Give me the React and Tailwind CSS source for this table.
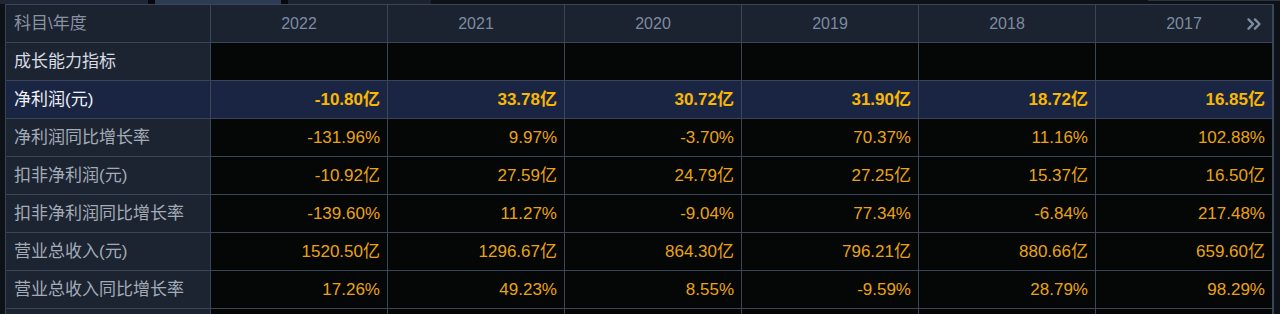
import { ChevronsRight } from 'lucide-react'

const YEARS = ['2022', '2021', '2020', '2019', '2018', '2017']

const ROWS = [
  { label: '净利润(元)', hi: true, values: ['-10.80亿', '33.78亿', '30.72亿', '31.90亿', '18.72亿', '16.85亿'] },
  { label: '净利润同比增长率', values: ['-131.96%', '9.97%', '-3.70%', '70.37%', '11.16%', '102.88%'] },
  { label: '扣非净利润(元)', values: ['-10.92亿', '27.59亿', '24.79亿', '27.25亿', '15.37亿', '16.50亿'] },
  { label: '扣非净利润同比增长率', values: ['-139.60%', '11.27%', '-9.04%', '77.34%', '-6.84%', '217.48%'] },
  { label: '营业总收入(元)', values: ['1520.50亿', '1296.67亿', '864.30亿', '796.21亿', '880.66亿', '659.60亿'] },
  { label: '营业总收入同比增长率', values: ['17.26%', '49.23%', '8.55%', '-9.59%', '28.79%', '98.29%'] },
]

const FONT = { fontFamily: '"Liberation Sans", "Noto Sans CJK SC", sans-serif' }

export default function App() {
  return (
    <div className="w-[1280px] h-[314px] overflow-hidden bg-[#0d1118]" style={FONT}>
      {/* Top tab strip */}
      <div className="flex h-[4px]">
        <div className="w-[148px] bg-[#1f2635]" />
        <div className="w-[7px] bg-[#07090c]" />
        <div className="w-[126px] bg-[#2e3c53]" />
        <div className="w-[7px] bg-[#07090c]" />
        <div className="w-[143px] bg-[#1c2230]" />
        <div className="flex-1 bg-[#0e1118]" />
        <div className="w-[132px] bg-[#0e1118] border-t border-[#2a3342]" />
      </div>

      {/* Table */}
      <div className="ml-[5px] w-[1269px] grid grid-cols-[204px_repeat(6,176px)] auto-rows-[37px] gap-px p-px bg-[#3a4558]">
        {/* Header */}
        <div className="bg-[#1b2230] flex items-center pl-[8px] text-[17px] text-[#8892a0]">科目\年度</div>
        {YEARS.map((y, i) => (
          <div key={y} className="relative bg-[#1b2230] flex items-center justify-center text-[16px] text-[#7d8ba0]">
            {y}
            {i === YEARS.length - 1 && (
              <ChevronsRight size={22} strokeWidth={2.6} className="absolute right-[7px] top-[8px] text-[#7f8da2]" />
            )}
          </div>
        ))}

        {/* Section title */}
        <div className="bg-[#1c2432] flex items-center pl-[8px] text-[17px] text-[#d6dbe2]">成长能力指标</div>
        {YEARS.map(y => (
          <div key={y} className="bg-[#050606]" />
        ))}

        {ROWS.map(r => (
          <Row key={r.label} row={r} />
        ))}

        {/* Cut-off row */}
        <div className="bg-[#1c2432]" />
        {YEARS.map(y => (
          <div key={y} className="bg-[#050606]" />
        ))}
      </div>
    </div>
  )
}

function Row({ row }) {
  const labelCls = row.hi
    ? 'bg-[#1a2543] text-[#eef1f6]'
    : 'bg-[#1c2432] text-[#a3abb7]'
  const cellCls = row.hi
    ? 'bg-[#1a2543] text-[#f9b800] font-bold'
    : 'bg-[#050606] text-[#e9a312]'
  return (
    <>
      <div className={`flex items-center pl-[8px] text-[17px] ${labelCls}`}>{row.label}</div>
      {row.values.map((v, i) => (
        <div key={i} className={`flex items-center justify-end pr-[7px] text-[17px] ${cellCls}`}>
          {v}
        </div>
      ))}
    </>
  )
}
